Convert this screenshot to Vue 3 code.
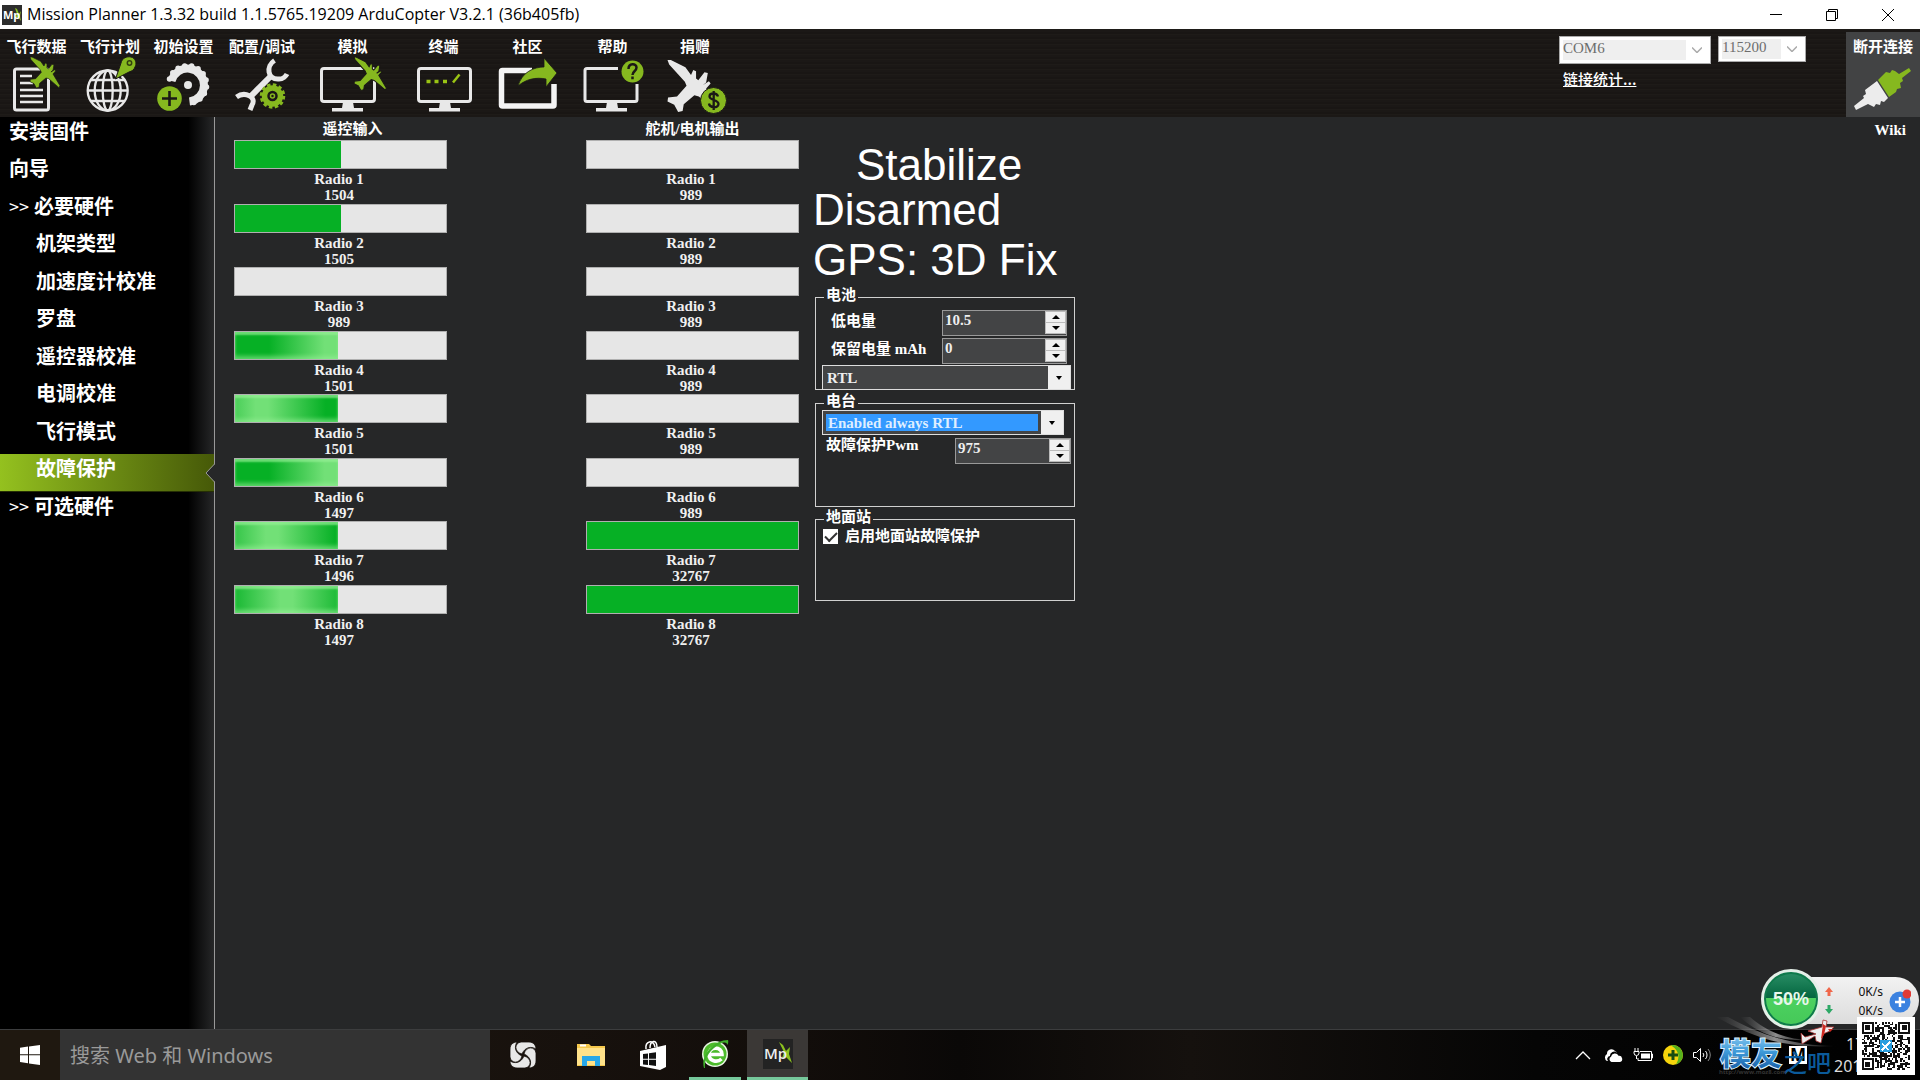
<script setup>
import { ref } from 'vue'

const inputs = [
  { value: 1504, pct: 50 },
  { value: 1505, pct: 50 },
  { value: 989, pct: 0 },
  { value: 1501, pct: 49, peak: 95 },
  { value: 1501, pct: 49, peak: 28 },
  { value: 1497, pct: 49, peak: 95 },
  { value: 1496, pct: 49, peak: 38 },
  { value: 1497, pct: 49, peak: 52 },
]
const outputs = [989, 989, 989, 989, 989, 989, 32767, 32767].map((value) => ({
  value,
  pct: value > 2000 ? 100 : 0,
}))
const columns = [
  { title: '遥控输入', cls: 'in', rows: inputs },
  { title: '舵机/电机输出', cls: 'out', rows: outputs },
]

const nav = [
  { text: '安装固件' },
  { text: '向导' },
  { text: '必要硬件', group: true },
  { text: '机架类型', sub: true },
  { text: '加速度计校准', sub: true },
  { text: '罗盘', sub: true },
  { text: '遥控器校准', sub: true },
  { text: '电调校准', sub: true },
  { text: '飞行模式', sub: true },
  { text: '故障保护', sub: true, active: true },
  { text: '可选硬件', group: true },
]

const lowBattery = ref('10.5')
const reserved = ref('0')
const pwm = ref('975')
const gcs = ref(true)

function fillStyle(row) {
  const style = { width: row.pct + '%' }
  if (row.peak) {
    style.background = `linear-gradient(90deg, #06b025 ${row.peak - 62}%, #72e077 ${row.peak - 8}%, #72e077 ${row.peak + 4}%, #06b025 ${row.peak + 60}%)`
  }
  return style
}

// QR modules: three finder squares, the rest filled from a small generator
const N = 29
function finder(x, y) {
  const corners = [[0, 0], [N - 7, 0], [0, N - 7]]
  for (const [cx, cy] of corners) {
    const dx = x - cx
    const dy = y - cy
    if (dx >= -1 && dx <= 7 && dy >= -1 && dy <= 7) {
      const d = Math.max(Math.abs(dx - 3), Math.abs(dy - 3))
      return d === 3 || d <= 1 ? 1 : 0
    }
  }
  return -1
}
let seed = 4177
let qrPath = ''
for (let y = 0; y < N; y++) {
  for (let x = 0; x < N; x++) {
    seed = (seed * 1103515245 + 12345) % 2147483648
    const f = finder(x, y)
    const on = f === -1 ? seed / 2147483648 > 0.5 : f === 1
    if (on) qrPath += `M${x} ${y}h1v1h-1z`
  }
}
const planePath = 'M0 0L6 0L32 13L42 27L46 18L51 20L51 33L55 36L66 22L72 23L69 40L63 45L74 38L77 42L69 51L90 86L87 92L56 65L48 63L29 79L27 91L19 93L12 80L0 74L1 67L17 65L34 46L31 39L3 8Z'
</script>

<template>
  <div class="page">
    <svg class="defs" width="0" height="0" aria-hidden="true">
      <defs><path id="plane" :d="planePath" /></defs>
    </svg>

    <header class="titlebar">
      <svg width="20" height="20" viewBox="0 0 20 20"><rect width="20" height="20" fill="#2d2d2d" /><path d="M13 3l2 1 2 5 2-3-1 5 1 5-3-4-3 1 2-4z" fill="#8cc21f" /><text x="1" y="14" font-size="11" font-family="Open Sans" fill="#fff">Mp</text></svg>
      <h1>Mission Planner 1.3.32 build 1.1.5765.19209 ArduCopter V3.2.1 (36b405fb)</h1>
      <div class="winbtns">
        <button aria-label="最小化"><svg width="12" height="12" viewBox="0 0 12 12"><path d="M0 5.500h12" stroke="#000" /></svg></button>
        <button aria-label="还原"><svg width="12" height="12" viewBox="0 0 12 12"><path d="M.5 2.500h9v9h-9zM2.500 2.500v-2h9v9h-2" stroke="#000" fill="none" /></svg></button>
        <button aria-label="关闭"><svg width="12" height="12" viewBox="0 0 12 12"><path d="M0 0l12 12M12 0L0 12" stroke="#000" /></svg></button>
      </div>
    </header>

    <div class="toolbar">
      <nav class="tools">
        <button class="w73"><span>飞行数据</span>
          <svg width="73" height="60" viewBox="0 56 73 60"><rect x="14.500" y="69" width="34" height="41" rx="2" fill="none" stroke="#e8e8e8" stroke-width="3" /><path d="M20 76h12M20 83h13M20 90h23M20 96h23M20 102h23" stroke="#e8e8e8" stroke-width="2.500" /><use href="#plane" transform="translate(30 57) scale(.333)" fill="#86b81f" stroke="#1b1816" stroke-width="2" /></svg></button>
        <button class="w74"><span>飞行计划</span>
          <svg width="74" height="60" viewBox="73 56 74 60"><g fill="none" stroke="#e8e8e8" stroke-width="2.300"><circle cx="107.700" cy="90.500" r="20" /><ellipse cx="107.700" cy="90.500" rx="13" ry="20" /><ellipse cx="107.700" cy="90.500" rx="5" ry="20" /><path d="M88 90.500h40M91 80h33M91 101h33" /></g><path d="M115.500 79L121 63C122 58 127 56 131 57C136 58 137 64 135 67C134 70 132 71 129 72Z" fill="#86b81f" stroke="#1b1816" /><circle cx="129.500" cy="63" r="2.200" fill="none" stroke="#33400f" stroke-width="1.500" /></svg></button>
        <button class="w73"><span>初始设置</span>
          <svg width="73" height="60" viewBox="147 56 73 60"><g fill="none" stroke="#e8e8e8"><path d="M171.500 81A16.500 16.500 0 1 1 189.500 101.500" stroke-width="8" /><path d="M169.500 79A19 19 0 1 1 190 103.500" stroke-width="5.500" stroke-dasharray="0 7" stroke-linecap="round" /></g><circle cx="188" cy="85" r="4" fill="#e8e8e8" /><circle cx="169.500" cy="98.500" r="12.300" fill="#86b81f" /><path d="M169.500 91v15M162 98.500h15" stroke="#1b1816" stroke-width="2.600" /></svg></button>
        <button class="w84"><span>配置/调试</span>
          <svg width="84" height="60" viewBox="220 56 84 60"><g fill="none" stroke="#e8e8e8"><path d="M250 97L271 76" stroke-width="6" /><path d="M274.500 60.500C266 66 267 80 279 79C283 79 286 76 287 74" stroke-width="5" /><path d="M236.500 97C245 91 257 97 252 105L250 110" stroke-width="5" /></g><g fill="none" stroke="#86b81f"><circle cx="272.500" cy="96" r="8" stroke-width="5.500" /><circle cx="272.500" cy="96" r="11" stroke-width="3.500" stroke-dasharray="3.400 2.360" /><circle cx="272.500" cy="96" r="2" stroke-width="1.500" /></g></svg></button>
        <button class="w97"><span>模拟</span>
          <svg width="97" height="60" viewBox="304 56 97 60"><rect x="321.500" y="68.500" width="53" height="33" rx="2.500" fill="none" stroke="#e8e8e8" stroke-width="3" /><path d="M343 102h10l1 6h9v3.500h-31V108h10z" fill="#e8e8e8" /><use href="#plane" transform="translate(354 57) scale(.36)" fill="#86b81f" stroke="#1b1816" stroke-width="3" /></svg></button>
        <button class="w85"><span>终端</span>
          <svg width="85" height="60" viewBox="401 56 85 60"><rect x="418.500" y="68.500" width="52" height="33" rx="2.500" fill="none" stroke="#e8e8e8" stroke-width="3" /><path d="M440 102h10l1 6h9v3.500h-31V108h10z" fill="#e8e8e8" /><path d="M426.500 81.500h4M434.500 81.500h4M443 81.500h4" stroke="#9ac414" stroke-width="3.500" /><path d="M453 82.500l6.500-8" stroke="#9ac414" stroke-width="2.500" /></svg></button>
        <button class="w83"><span>社区</span>
          <svg width="83" height="60" viewBox="486 56 83 60"><path d="M532 70.500H502.500a1 1 0 0 0-1 1V105a1 1 0 0 0 1 1H553a1 1 0 0 0 1-1V84" fill="none" stroke="#f4f4f4" stroke-width="5.500" /><path d="M518 86C522 72 534 67 544 67V58L557 73L546 87V79C536 77 526 79 518 86Z" fill="#86b81f" stroke="#1b1816" stroke-width=".8" /></svg></button>
        <button class="w87"><span>帮助</span>
          <svg width="87" height="60" viewBox="569 56 87 60"><path d="M618 68.500H587a2 2 0 0 0-2 2V99.500a2 2 0 0 0 2 2H635a2 2 0 0 0 2-2V84" fill="none" stroke="#e8e8e8" stroke-width="3" /><path d="M607 102h10l1 6h9v3.500h-31V108h10z" fill="#e8e8e8" /><circle cx="632.500" cy="71.500" r="11" fill="#86b81f" /><path d="M628.500 69c0-6 8-6 8-1.500c0 4-4 3.500-4 7.500M632.500 76.500v2.800" fill="none" stroke="#1b1816" stroke-width="2.500" /></svg></button>
        <button class="w78"><span>捐赠</span>
          <svg width="78" height="60" viewBox="656 56 78 60"><use href="#plane" transform="translate(667.500 60) scale(.56)" fill="#e8e8e8" /><circle cx="713.500" cy="100.500" r="13" fill="#86b81f" stroke="#1b1816" /><path d="M718 96.500c-1-4-8.500-4-8.500 0s9 3 9 7.500s-9 4-9.500-.5M713.700 91v19" fill="none" stroke="#1b1816" stroke-width="2.300" /></svg></button>
      </nav>
      <div class="conn">
        <div class="ports">
          <div class="dis com"><select aria-label="端口" disabled><option>COM6</option></select><svg width="10" height="6" viewBox="0 0 10 6"><path d="M0 .5l5 5 5-5" fill="none" stroke="#aaa" stroke-width="1.500" /></svg></div>
          <div class="dis baud"><select aria-label="波特率" disabled><option>115200</option></select><svg width="10" height="6" viewBox="0 0 10 6"><path d="M0 .5l5 5 5-5" fill="none" stroke="#aaa" stroke-width="1.500" /></svg></div>
        </div>
        <a href="#stats">链接统计...</a>
      </div>
      <button class="disconnect"><span>断开连接</span>
        <svg width="58" height="44" viewBox="0 0 58 44"><path d="M0 38L10 30L9 28L12 26L11 22L23 13L34 30L30 34L27 33L26 37L22 36L20 39L14 36L2 42Z" fill="#ececec" /><path d="M24 12L32 4L36 5L38 2L41 3L45 6L55 0L57 3L48 10L49 13L46 15L47 20L43 21L42 24L35 29Z" fill="#86b81f" /></svg></button>
    </div>

    <main class="main">
      <nav class="side">
        <ul>
          <li v-for="n in nav" :key="n.text" :class="{ sub: n.sub, active: n.active, group: n.group }">
            <a href="#nav"><span v-if="n.group" class="arr">&gt;&gt;</span>{{ n.text }}</a>
            <svg v-if="n.active" class="notch" width="10" height="18" viewBox="0 0 10 18"><path d="M10 0L1 9l9 9z" fill="#262728" /><path d="M9.500 0L1 9l8.500 9" fill="none" stroke="#999" /></svg>
          </li>
        </ul>
      </nav>

      <section class="content">
        <section v-for="c in columns" :key="c.cls" class="col" :class="c.cls">
          <h2>{{ c.title }}</h2>
          <ol>
            <li v-for="(r, i) in c.rows" :key="i">
              <div class="bar" role="progressbar" :aria-valuenow="r.value" :aria-label="'Radio ' + (i + 1)">
                <div class="fill" :class="{ glow: r.peak }" :style="fillStyle(r)"></div>
              </div>
              <p>Radio {{ i + 1 }}</p>
              <p>{{ r.value }}</p>
            </li>
          </ol>
        </section>

        <section class="panel">
          <p class="big mode">Stabilize</p>
          <p class="big">Disarmed</p>
          <p class="big gps">GPS: 3D Fix</p>

          <fieldset class="battery">
            <legend>电池</legend>
            <div class="line">
              <label for="low">低电量</label>
              <span class="spin"><input id="low" v-model="lowBattery" type="text" /><span class="ud"><button aria-label="增加"><i class="up"></i></button><button aria-label="减少"><i class="dn"></i></button></span></span>
            </div>
            <div class="line">
              <label for="res">保留电量 mAh</label>
              <span class="spin"><input id="res" v-model="reserved" type="text" /><span class="ud"><button aria-label="增加"><i class="up"></i></button><button aria-label="减少"><i class="dn"></i></button></span></span>
            </div>
            <div class="combo wide"><select aria-label="低电量动作"><option>RTL</option></select><span class="drop"><i class="dn"></i></span></div>
          </fieldset>

          <fieldset class="radio">
            <legend>电台</legend>
            <div class="combo hot"><select aria-label="电台故障保护"><option>Enabled always RTL</option></select><span class="drop"><i class="dn"></i></span></div>
            <div class="line">
              <label for="pwm">故障保护Pwm</label>
              <span class="spin"><input id="pwm" v-model="pwm" type="text" /><span class="ud"><button aria-label="增加"><i class="up"></i></button><button aria-label="减少"><i class="dn"></i></button></span></span>
            </div>
          </fieldset>

          <fieldset class="ground">
            <legend>地面站</legend>
            <label class="check"><input v-model="gcs" type="checkbox" />启用地面站故障保护</label>
          </fieldset>
        </section>

        <a class="wiki" href="#wiki">Wiki</a>
      </section>
    </main>

    <footer class="taskbar">
      <button class="start" aria-label="开始"><svg width="20" height="20" viewBox="0 0 20 20"><path d="M0 2.800L8 1.600V9.300H0zM9 1.400L20 0V9.300H9zM0 10.300H8V18.200L0 17zM9 10.300H20V20L9 18.500z" fill="#fff" /></svg></button>
      <input class="search" type="text" placeholder="搜索 Web 和 Windows" aria-label="搜索" />
      <div class="apps">
        <button aria-label="应用"><svg width="28" height="28" viewBox="-14 -14 28 28" fill="#e8e8e8"><g v-for="a in [0, 90, 180, 270]" :key="a" :transform="`rotate(${a})`"><path d="M-1 -1C-9 -3 -9 -12 -2 -13H6C11 -13 13 -9 13 -6C8 -9 2 -8 -1 -1Z" stroke="#15100d" stroke-width=".8" /></g></svg></button>
        <button aria-label="文件资源管理器"><svg width="28" height="24" viewBox="0 0 28 24"><path d="M0 1h12l2 2h14v20H0z" fill="#f5c84c" /><path d="M0 5h28v17H0z" fill="#ffe28a" /><path d="M3 1.500h6v2H3z" fill="#fff" /><path d="M5 23V13h18v10h-5v-5h-8v5z" fill="#27a7e8" /></svg></button>
        <button aria-label="应用商店"><svg width="26" height="30" viewBox="0 0 26 30"><path d="M0 11L26 5V27L20 30L0 26z" fill="#fff" /><path d="M6 9C5 1 13-1 15 7M10 8C10 0 17-1 17 7" fill="none" stroke="#fff" stroke-width="1.500" /><path d="M3 14l5-.6v5.300H3zM9 13.300l7-1v6.400H9zM3 19.700h5V25l-5-.6zM9 19.700h7V26l-7-.9z" fill="#111" /></svg></button>
        <button class="run" aria-label="浏览器"><svg width="28" height="30" viewBox="0 0 28 30"><circle cx="14" cy="15" r="13" fill="#eaf6e4" /><circle cx="14" cy="15" r="11.500" fill="#4dbb2c" /><path d="M6.500 15.500H21C21 7 8 7 8 15.500C8 22 16 24 20.500 20" fill="none" stroke="#fff" stroke-width="3.600" /><path d="M3 29C-1 17 13 1 27 1c1 3-1 5-1 5c0-3-3-3-7-1C9 10 3 20 4 29z" fill="#3fae2a" /></svg></button>
        <button class="run current" aria-label="Mission Planner"><svg width="30" height="30" viewBox="0 0 30 30"><rect width="30" height="30" fill="#232323" /><path d="M16 3l4 3 3 6 4-4-1 7 3 9-6-6-4 1 2-6z" fill="#8cc21f" /><text x="1" y="20" font-size="15" font-family="Open Sans" font-weight="600" fill="#eee">Mp</text></svg></button>
      </div>
      <div class="tray">
        <svg width="16" height="9" viewBox="0 0 16 9"><path d="M1 8l7-7 7 7" fill="none" stroke="#fff" stroke-width="1.300" /></svg>
        <svg width="20" height="13" viewBox="0 0 20 13"><path d="M4 12a4 4 0 0 1 0-7a4.500 4.500 0 0 1 8-3a4 4 0 0 1 2 2a4 4 0 0 0-7 3a3 3 0 0 0-2 5z" fill="#fff" /><path d="M8.500 13a2.800 2.800 0 0 1-.5-5.200a4 4 0 0 1 7.500-1a3.200 3.200 0 0 1 1.500 6.200z" fill="#fff" /></svg>
        <svg width="20" height="14" viewBox="0 0 20 14"><path d="M7 3.500h11.500v9H5V10M18.500 6h1v4h-1" fill="none" stroke="#fff" /><path d="M8 5.500h9v5H8z" fill="#fff" /><path d="M2 0v3M5 0v3M1 3.500h5v1.500a2.500 2.500 0 0 1-5 0zM3.500 8v3" fill="none" stroke="#fff" /></svg>
        <svg width="20" height="20" viewBox="0 0 20 20"><circle cx="10" cy="10" r="10" fill="#f6d40c" /><path d="M10 0a10 10 0 0 1 3 19.500C16 14 18 7 8 .2z" fill="#57b21c" /><path d="M10 5v10M5 10h10" stroke="#174d12" stroke-width="3" /></svg>
        <svg width="20" height="16" viewBox="0 0 20 16" fill="none" stroke="#fff"><path d="M.5 5.500h3l4-4v13l-4-4h-3z" /><path d="M10 6a3 3 0 0 1 0 4M12.500 4a6 6 0 0 1 0 8" /><path d="M15 2a9 9 0 0 1 0 12" stroke="#888" /></svg>
        <span class="ime">M</span>
        <div class="clock"><span class="t">17</span><span>201</span></div>
      </div>
    </footer>

    <aside class="speed">
      <div class="pill">
        <svg width="8" height="28" viewBox="0 0 8 28"><path d="M0 5L4 0l4 5H5.500v4h-3V5z" fill="#f0674a" /><path d="M0 22l4 5 4-5H5.500v-4h-3v4z" fill="#2da866" /></svg>
        <div class="rates"><span>0K/s</span><span>0K/s</span></div>
        <svg width="22" height="24" viewBox="0 0 22 24"><circle cx="11" cy="13" r="10.500" fill="#3b82e0" /><path d="M11 8v10M6 13h10" stroke="#fff" stroke-width="2.500" /><circle cx="18" cy="5" r="4.500" fill="#e03a36" /></svg>
      </div>
      <div class="ball">50%</div>
    </aside>

    <aside class="mark">
      <svg width="210" height="66" viewBox="1710 1012 210 66">
        <defs>
          <linearGradient id="sw" x1="0" x2="1"><stop offset="0" stop-color="#777" stop-opacity="0" /><stop offset=".5" stop-color="#ccc" stop-opacity=".7" /><stop offset="1" stop-color="#999" stop-opacity=".1" /></linearGradient>
          <linearGradient id="blue" x1="0" x2="0" y1="0" y2="1"><stop offset="0" stop-color="#9fd6f7" /><stop offset=".5" stop-color="#3f9bd9" /><stop offset="1" stop-color="#0c4f9c" /></linearGradient>
        </defs>
        <path d="M1716 1017C1750 1035 1780 1049 1834 1046C1790 1046 1755 1032 1728 1017Z" fill="url(#sw)" />
        <path d="M1740 1017C1760 1036 1785 1042 1812 1040C1785 1040 1765 1030 1750 1017Z" fill="url(#sw)" />
        <path d="M1801 1033l4 4 11-3-8-3 14-4 1-7 4 1-1 6 8 0-4 4-7 3-2 9-5-2-1-5-13 8z" fill="#eee" stroke="#a33" stroke-width=".8" />
        <path d="M1823 1024l3 2-2 9-3 4zM1828 1029h5l-3 3z" fill="#d02a22" />
        <text x="1720" y="1065" font-size="31" font-weight="700" font-family="Noto Sans CJK SC" fill="url(#blue)" stroke="#dff2fd" stroke-width="2" paint-order="stroke">模友</text>
        <text x="1783" y="1072" font-size="24" font-weight="500" font-family="Noto Sans CJK SC" fill="#0b5a9a">之吧</text>
        <text x="1719" y="1074" font-size="6" font-family="Open Sans" fill="#333">http://www.moz8.com</text>
      </svg>
      <svg class="qr" width="58" height="58" viewBox="-3 -3 35 35" shape-rendering="crispEdges"><rect x="-3" y="-3" width="35" height="35" fill="#fff" /><path :d="qrPath" fill="#111" /><rect x="11" y="11" width="7" height="7" fill="#2a9fe0" /><path d="M12 17l5-5M12 13l4 4" stroke="#fff" /></svg>
    </aside>
  </div>
</template>

<style>
body { margin: 0; background: #262728; }
</style>

<style scoped>
* { box-sizing: border-box; }
.page {
  position: relative; min-height: 100vh; display: flex; flex-direction: column;
  font: bold 15px/16px "Liberation Serif", "Noto Sans CJK SC", serif; color: #fff; background: #262728;
}
.page p, .page h1, .page h2, .page ul, .page ol { margin: 0; padding: 0; list-style: none; font-weight: inherit; font-size: inherit; }
button { border: 0; padding: 0; margin: 0; background: none; color: inherit; font: inherit; }
a { color: inherit; text-decoration: none; }
svg { display: block; flex: none; }
.defs { position: absolute; }

.titlebar { height: 29px; background: #fff; color: #000; display: flex; align-items: center; padding-left: 2px; }
.page .titlebar h1 { flex: 1; margin-left: 5px; padding-bottom: 2px; font: 16px/26px "Open Sans", sans-serif; }
.winbtns { display: flex; margin-right: 4px; }
.winbtns button { width: 56px; height: 28px; display: grid; place-items: center; }

.toolbar {
  height: 88px; display: flex;
  background: repeating-linear-gradient(0deg, #1b1816 0 2px, #1e1b18 2px 3px, #191614 3px 5px);
  font-family: "Noto Sans CJK SC", sans-serif;
}
.tools { display: flex; }
.tools button { display: flex; flex-direction: column; align-items: center; padding-top: 9px; }
.tools span, .disconnect span { line-height: 16px; height: 18px; white-space: nowrap; }
.w73 { width: 73px; } .w74 { width: 74px; } .w78 { width: 78px; } .w83 { width: 83px; }
.w84 { width: 84px; } .w85 { width: 85px; } .w87 { width: 87px; } .w97 { width: 97px; }
.conn { margin-left: auto; padding-top: 7px; margin-right: 40px; }
.ports { display: flex; align-items: flex-start; gap: 7px; margin-bottom: 7px; }
.dis { background: #fff; display: flex; align-items: center; border: 1px solid #aaa; padding: 3px; }
.dis select { appearance: none; border: 0; padding: 0 0 4px; background: #efefef; color: #6d6d6d; opacity: 1; font: 15px/16px "Liberation Serif", serif; height: 20px; }
.dis svg { margin: 0 auto; }
.com { width: 152px; height: 28px; }
.com select { width: 123px; }
.baud { width: 88px; height: 26px; }
.baud select { width: 59px; }
.conn a { text-decoration: underline; font-weight: 500; margin-left: 4px; }
.disconnect { width: 74px; margin-top: 3px; padding-top: 6px; background: #424344; display: flex; flex-direction: column; align-items: center; gap: 12px; }

.main { flex: 1; display: flex; }
.side { width: 215px; border-right: 1px solid #999; background: linear-gradient(90deg, #000 88%, #262728); font-family: "Noto Sans CJK SC", sans-serif; font-size: 20px; }
.page .side ul { height: 412px; display: grid; grid-auto-rows: 1fr; }
.side li { position: relative; padding: 2px 0 0 9px; white-space: nowrap; }
.side li a { display: block; line-height: 24px; }
.side .sub { padding-left: 36px; }
.side .arr { font-size: 18px; font-weight: 400; margin-right: 5px; }
.side .active { background: linear-gradient(90deg, #94c11f, #465908); border-bottom: 1px solid #263004; }
.notch { position: absolute; right: -1px; top: 10px; }

.content { flex: 1; display: flex; align-items: flex-start; padding: 2px 14px 0 19px; }
.col { width: 213px; text-align: center; }
.out { margin: 0 14px 0 139px; }
.page .col h2 { line-height: 21px; }
.page .in h2 { padding-left: 24px; }
.page .col ol { height: 508px; display: grid; grid-auto-rows: 1fr; }
.bar { height: 29px; border: 1px solid #b0b0b0; background: #e6e6e6; margin-bottom: 2px; }
.col p { padding-right: 3px; color: #f0f0f0; }
.fill { height: 100%; background: #06b025; }
.glow { box-shadow: inset 0 3px 2px rgba(150, 240, 150, 0.7), inset 0 -4px 4px -1px rgba(150, 240, 150, 0.6); }

.panel { width: 262px; padding-top: 23px; }
.page .big { font: 44px/45px "Liberation Sans", sans-serif; white-space: nowrap; }
.page .mode { padding-left: 43px; }
.page .gps { line-height: 55px; }
fieldset { margin: 0 0 0 2px; border: 1px solid #d0d0d0; padding: 0; min-width: 0; }
legend { margin-left: 8px; padding: 0 2px; height: 16px; line-height: 13px; }
.page .battery { margin-top: 2px; height: 101px; }
.page .radio { margin-top: 5px; height: 112px; }
.page .ground { margin-top: 4px; height: 90px; }
.line { display: flex; justify-content: space-between; padding: 0 7px 0 15px; }
.battery .line { margin: 5px 0 2px; }
.battery .line + .line { margin: 0 0 1px; }
.battery .line label { padding-top: 3px; }
.spin { display: flex; width: 125px; height: 26px; border: 1px solid #999; background: #434445; }
.spin input { flex: 1; min-width: 0; border: 0; padding: 0 0 6px 2px; background: none; color: #eee; font: inherit; }
.ud { width: 21px; height: 23px; background: #bbb; display: flex; flex-direction: column; gap: 1px; padding: 1px; }
.ud button { flex: 1; background: #f0f0f0; display: grid; place-items: center; }
.up, .dn { width: 0; height: 0; border: 4px solid transparent; border-top-width: 0; border-bottom-color: #000; }
.dn { border-top: 4px solid #000; border-bottom-width: 0; }
.combo { display: flex; border: 1px solid #ddd; background: #434445; height: 25px; margin-left: 6px; }
.combo select { flex: 1; min-width: 0; appearance: none; border: 0; padding: 0 4px; background: none; color: #eee; font: inherit; }
.combo select option { color: #000; }
.drop { width: 22px; background: #f0f0f0; display: grid; place-items: center; }
.drop i { border-width: 4px 3px 0; }
.wide { width: 249px; }
.hot { width: 242px; margin-top: -1px; margin-bottom: 3px; }
.hot select { margin: 3px; padding: 0 2px; background: #3399ff; color: #dfeeff; }
.radio .line { padding: 0 3px 0 10px; }
.radio .line label { line-height: 14px; }
.radio .spin { width: 116px; }
.check { display: flex; align-items: center; gap: 7px; padding: 0 0 0 7px; }
.check input { appearance: none; margin: 2px 0 0; width: 15px; height: 15px; background: #fff; display: grid; place-items: center; }
.check input:checked::after { content: ""; width: 10px; height: 5px; border: solid #333; border-width: 0 0 2px 2px; transform: translateY(-1px) rotate(-45deg); }
.wiki { margin: 3px 0 0 auto; }

.taskbar { height: 51px; display: flex; border-top: 1px solid #3c3d3e; background: linear-gradient(90deg, #1f1810 3%, #17110d 30%, #120d0a 42%, #0a0807 50%, #15110e 62%, #050505 80%, #000); }
.start { width: 60px; display: grid; place-items: center; }
.search { width: 430px; border: 0; padding: 0 10px; background: #333; font: 20px "Noto Sans", "Noto Sans CJK SC", sans-serif; }
.search::placeholder { color: #9a9a9a; opacity: 1; }
.apps { display: flex; }
.apps button { width: 66px; display: grid; place-items: center; padding-bottom: 0; }
.apps button:nth-child(2) { width: 70px; }
.apps button:nth-child(3) { width: 54px; margin-right: 9px; }
.apps .run { width: 52px; border-bottom: 3px solid #76c89b; margin-right: 6px; }
.apps .current { width: 61px; background: #3b3836; margin: 0; }
.tray { margin-left: auto; display: flex; align-items: center; gap: 10px; }
.tray svg:first-child { margin-right: 2px; }
.ime { margin-left: 66px; width: 18px; height: 18px; background: #fff; color: #000; font: bold 17px/18px "Open Sans", sans-serif; text-align: center; }
.clock { width: 86px; margin-left: 17px; display: flex; flex-direction: column; font: 16px/22px "Noto Sans", sans-serif; color: #ddd; }
.t { padding-left: 12px; }

.speed { position: absolute; right: 1px; bottom: 51px; width: 158px; height: 60px; }
.pill { margin: 8px 0 0 38px; height: 47px; border-radius: 0 24px 24px 0; background: linear-gradient(#f2f2f2, #dcdcdc); display: flex; align-items: center; padding: 0 8px 0 26px; color: #111; }
.rates { flex: 1; margin-right: 6px; display: flex; flex-direction: column; text-align: right; font: 12px/19px "Noto Sans", sans-serif; }
.ball { position: absolute; left: 0; top: 0; width: 60px; height: 60px; border-radius: 50%; border: 3px solid #e4efe8; background: linear-gradient(#2a8f66, #04663f 48%, #4cd160 49%, #45c858); box-shadow: inset 0 0 0 2px #0f7a4c; font: bold 18px/54px "Liberation Sans", sans-serif; text-align: center; color: #e8f7ec; }
.mark { position: absolute; right: 0; bottom: 2px; width: 210px; height: 66px; }
.qr { position: absolute; right: 5px; top: 5px; }
</style>
